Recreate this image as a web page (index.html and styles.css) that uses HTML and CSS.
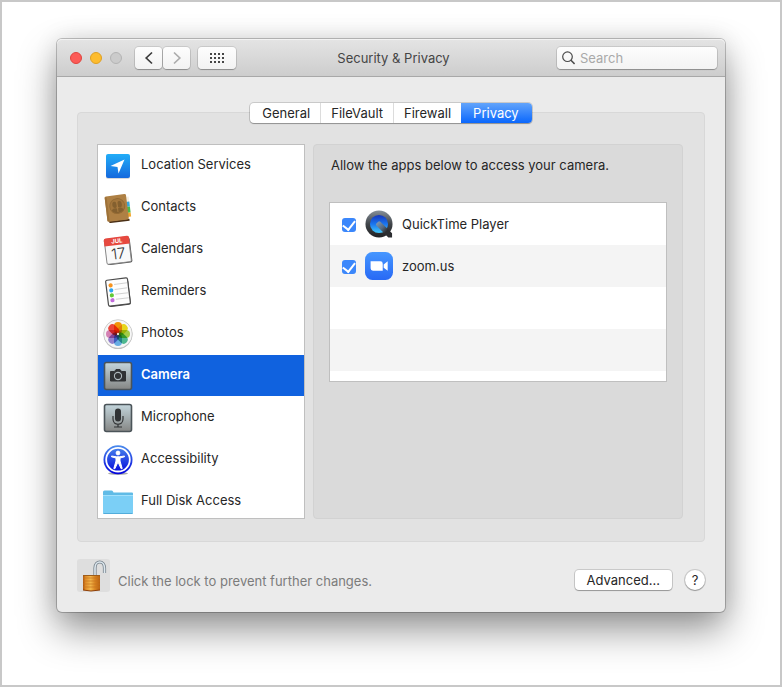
FILE: index.html
```html
<!DOCTYPE html>
<html lang="en">
<head>
<meta charset="utf-8">
<meta name="viewport" content="width=device-width, initial-scale=1">
<title>Security &amp; Privacy</title>
<link rel="stylesheet" href="styles.css">
</head>
<body>
<main class="window">
  <header class="titlebar">
    <div class="titlebar-side">
      <div class="lights">
        <button class="light light-close" aria-label="Close"></button>
        <button class="light light-minimize" aria-label="Minimize"></button>
        <button class="light light-zoom" aria-label="Full screen" disabled></button>
      </div>
      <div class="history">
        <button class="tool" aria-label="Back"><svg width="10" height="14" viewBox="0 0 10 14"><path d="M8 1.500 2.200 7 8 12.500" fill="none" stroke="#3c3c3c" stroke-width="1.700"/></svg></button>
        <button class="tool" aria-label="Forward" disabled><svg width="10" height="14" viewBox="0 0 10 14"><path d="M2 1.500 7.800 7 2 12.500" fill="none" stroke="#acacac" stroke-width="1.700"/></svg></button>
      </div>
      <button class="tool tool-grid" aria-label="Show all"><svg width="14" height="10" viewBox="0 0 14 10"><path d="M0 1h14M0 5h14M0 9h14" fill="none" stroke="#464646" stroke-width="2" stroke-dasharray="2 2"/></svg></button>
    </div>
    <h1 class="title">Security &amp; Privacy</h1>
    <div class="titlebar-side titlebar-end">
      <label class="search">
        <svg width="13" height="14" viewBox="0 0 13 14"><g fill="none" stroke="#4a4a4a" stroke-width="1.200"><circle cx="5.500" cy="5.700" r="4.800"/><path d="m9 9.200 3.600 3.800" stroke-width="1.500"/></g></svg>
        <input type="search" placeholder="Search" aria-label="Search">
      </label>
    </div>
  </header>

  <div class="content">
    <nav class="tabs" aria-label="Sections">
      <button class="tab">General</button>
      <button class="tab">FileVault</button>
      <button class="tab tab-last">Firewall</button>
      <button class="tab tab-active" aria-current="page">Privacy</button>
    </nav>

    <section class="group">
      <ul class="services">
        <li><button class="service">
          <svg class="icon" viewBox="0 0 30 30"><defs><linearGradient id="loc" x2="0" y2="1"><stop stop-color="#22adf8"/><stop offset="1" stop-color="#1569dd"/></linearGradient></defs><rect x="3" y="4" width="24" height="24" rx="2" fill="#000" opacity=".15"/><rect x="3" y="3" width="24" height="24" rx="2" fill="url(#loc)"/><path d="M21.500 8.500 7.500 15l7 1 1 6.500z" fill="#fff"/></svg>
          Location Services</button></li>
        <li><button class="service">
          <svg class="icon" viewBox="0 0 30 30"><g transform="rotate(-7 15 15)"><rect x="23" y="5" width="4" height="7" fill="#f5efe2"/><rect x="23" y="10" width="4" height="5" fill="#36a8df"/><rect x="23" y="15" width="4" height="6" fill="#49b94b"/><rect x="23" y="21" width="4" height="4" fill="#f2a82d"/><path d="M4 27h21v2H5z" fill="#4a3016"/><rect x="3" y="2" width="21.500" height="25.500" rx="1.500" fill="#ae8044"/><path d="M3 3h2v24H3z" fill="#9d7138"/><circle cx="14.500" cy="13" r="7.500" fill="#a3763c" stroke="#936a34"/><g fill="#84602f"><ellipse cx="12" cy="11.500" rx="2.300" ry="3.200"/><ellipse cx="17" cy="11.500" rx="2.300" ry="3.200"/><path d="M8.500 17c1-2.500 5-2.500 6-1 1-1.500 5-1.500 6 1-3 4-9 4-12 0z"/></g><path d="M14.500 8v11" stroke="#a87b40"/></g></svg>
          Contacts</button></li>
        <li><button class="service">
          <svg class="icon" viewBox="0 0 30 30"><g transform="rotate(-7 15 15)"><rect x="3" y="4" width="25" height="25" rx="2" fill="#555"/><rect x="2.500" y="3" width="24.500" height="25" rx="1.500" fill="#f9f9f9" stroke="#888"/><path d="M2 4q0-2 2-2h21.500q2 0 2 2v6H2z" fill="#e6493f"/><text class="cal-month" x="15" y="8">JUL</text><text class="cal-day" x="15" y="24">17</text></g></svg>
          Calendars</button></li>
        <li><button class="service">
          <svg class="icon" viewBox="0 0 30 30"><g transform="rotate(-7 15 15)"><rect x="4.500" y="3.500" width="22" height="25.500" rx="2" fill="#444"/><rect x="4" y="2" width="22" height="26" rx="1.500" fill="#fdfdfd" stroke="#4b4b4b" stroke-width="1.200"/><path d="M12 7h13M12 12h13M12 17h13M12 22h13" stroke="#d2d2d2"/><circle cx="8.500" cy="7.500" r="2.100" fill="#f7931e"/><circle cx="8.500" cy="12.500" r="2.100" fill="#2fa5f0"/><circle cx="8.500" cy="17.500" r="2.100" fill="#62c936"/><circle cx="8.500" cy="22.500" r="2.100" fill="#c26bdc"/></g></svg>
          Reminders</button></li>
        <li><button class="service">
          <svg class="icon" viewBox="0 0 30 30"><circle cx="15" cy="15.600" r="14.300" fill="#aaa"/><circle cx="15" cy="15" r="14.300" fill="#f6f6f6" stroke="#c4c4c4" stroke-width=".8"/><g class="petals"><rect x="11" y="3" width="8" height="12" rx="4" fill="#fb9a0a"/><rect x="11" y="3" width="8" height="12" rx="4" fill="#f0dd1c" transform="rotate(45 15 15)"/><rect x="11" y="3" width="8" height="12" rx="4" fill="#a9d44a" transform="rotate(90 15 15)"/><rect x="11" y="3" width="8" height="12" rx="4" fill="#52bf95" transform="rotate(135 15 15)"/><rect x="11" y="3" width="8" height="12" rx="4" fill="#6cb4ec" transform="rotate(180 15 15)"/><rect x="11" y="3" width="8" height="12" rx="4" fill="#9a86d4" transform="rotate(225 15 15)"/><rect x="11" y="3" width="8" height="12" rx="4" fill="#dc86bb" transform="rotate(270 15 15)"/><rect x="11" y="3" width="8" height="12" rx="4" fill="#f4493c" transform="rotate(315 15 15)"/></g><circle cx="15" cy="15" r="1.200" fill="#e9dccb"/></svg>
          Photos</button></li>
        <li><button class="service service-active" aria-current="true">
          <svg class="icon" viewBox="0 0 30 30"><defs><linearGradient id="metal" x2="0" y2="1"><stop stop-color="#c3d5dc"/><stop offset="1" stop-color="#858684"/></linearGradient></defs><rect x="1.500" y="1.500" width="27" height="27" rx="2" fill="url(#metal)" stroke="#4b5459" stroke-width="1.600"/><path d="M7.500 10.500h4l1.500-2h4l1.500 2h4v9.500h-15z" fill="#303234" stroke="#303234" stroke-linejoin="round"/><circle cx="15" cy="15" r="3.600" fill="none" stroke="#aeb8bc" stroke-width="1.100"/></svg>
          Camera</button></li>
        <li><button class="service">
          <svg class="icon" viewBox="0 0 30 30"><rect x="1.500" y="1.500" width="27" height="27" rx="2" fill="url(#metal)" stroke="#4b5459" stroke-width="1.600"/><rect x="12" y="5.500" width="6" height="13" rx="3" fill="#303234"/><path d="M10 13v3c0 7 10 7 10 0v-3M15 21v3M11 24h8" fill="none" stroke="#303234" stroke-width="1.200"/></svg>
          Microphone</button></li>
        <li><button class="service">
          <svg class="icon" viewBox="0 0 30 30"><defs><linearGradient id="acc" x2="0" y2="1"><stop stop-color="#4c8dec"/><stop offset="1" stop-color="#0000dc"/></linearGradient></defs><ellipse cx="15" cy="28.500" rx="10" ry="1.500" fill="#aaa"/><circle cx="15" cy="14.700" r="14.500" fill="url(#acc)"/><circle cx="15" cy="14.700" r="11.800" fill="none" stroke="#fff" stroke-width="1.800"/><g fill="#fff" stroke="#fff" stroke-linejoin="round"><circle cx="15" cy="8" r="1.900"/><path d="m8.500 11 5 .8h3l5-.8v.8l-4.500 1.200v3l2.200 7.500-1 .3-3.200-6.800-3.200 6.800-1-.3L13 16v-3l-4.500-1.200z"/></g></svg>
          Accessibility</button></li>
        <li><button class="service">
          <svg class="icon" viewBox="0 0 30 30"><path d="M0 26V5q0-1.500 1.500-1.500h7q1 0 1.500 1l.5 1H29q1 0 1 1V26z" fill="#60bbe6"/><path d="M0 8.500h30V26q0 1-1 1H1q-1 0-1-1z" fill="#7bcff6"/><path d="M0 8.500h30" stroke="#a2e0fb"/><path d="M.5 26.500h29" stroke="#52addb"/></svg>
          Full Disk Access</button></li>
      </ul>

      <div class="panel">
        <p class="panel-text">Allow the apps below to access your camera.</p>
        <ul class="apps">
          <li class="app"><label>
            <input type="checkbox" checked>
            <svg class="app-icon" viewBox="0 0 30 30"><defs><linearGradient id="qt" x2="0" y2="1"><stop stop-color="#87919a"/><stop offset=".5" stop-color="#41454a"/><stop offset="1" stop-color="#202123"/></linearGradient><linearGradient id="qb" x2="0" y2="1"><stop stop-color="#1736bc"/><stop offset=".5" stop-color="#1a75ef"/><stop offset="1" stop-color="#43cafa"/></linearGradient><linearGradient id="qs" gradientUnits="userSpaceOnUse" x1="13" y1="13" x2="23" y2="23"><stop stop-color="#7f98b4"/><stop offset=".6" stop-color="#566a80"/><stop offset="1" stop-color="#2b2d30"/></linearGradient></defs><circle cx="15" cy="15" r="14.500" fill="url(#qt)"/><circle cx="15" cy="15" r="9.700" fill="url(#qb)"/><path d="m12.200 14.500 2-2q1.200-.8 2.300.2L29 25v4.500h-4L12.200 16.700q-1-1.100 0-2.200z" fill="url(#qs)"/></svg>
            <span>QuickTime Player</span></label></li>
          <li class="app"><label>
            <input type="checkbox" checked>
            <svg class="app-icon" viewBox="0 0 30 30"><defs><linearGradient id="zm" x2="0" y2="1"><stop stop-color="#4697ff"/><stop offset="1" stop-color="#2869f5"/></linearGradient></defs><rect width="30" height="30" rx="8" fill="url(#zm)"/><path d="M6 10h10.500q2.500 0 2.500 2.500V20H8.500Q6 20 6 17.500zM20 13.500 24.300 10v10L20 17z" fill="#fff"/></svg>
            <span>zoom.us</span></label></li>
          <li class="app"></li>
          <li class="app"></li>
          <li class="app"></li>
        </ul>
      </div>
    </section>

    <footer class="footer">
      <button class="lock" aria-label="Lock"><svg width="33" height="33" viewBox="0 0 33 33"><defs><linearGradient id="brass"><stop stop-color="#a8520d"/><stop offset=".15" stop-color="#df8c27"/><stop offset=".45" stop-color="#f3b74c"/><stop offset=".7" stop-color="#d98421"/><stop offset="1" stop-color="#b8610f"/></linearGradient></defs><path d="M18 16V9c0-8 9.500-8 9.500 0v5" fill="none" stroke="#78838c" stroke-width="3.200"/><path d="M18 16V9c0-8 9.500-8 9.500 0v5" fill="none" stroke="#dce7ee" stroke-width="1.600"/><path d="M6 16h17v15l-9 1-8-1z" fill="url(#brass)"/><path d="M6 19h17M6 22h17M6 25h17M6 28h17" stroke="#c57420" stroke-width=".7"/><path d="M6 16.500h17" stroke="#9e5d1a"/><path d="m6 31 8 1 9-1" fill="none" stroke="#8f3f08"/></svg></button>
      <p class="footer-text">Click the lock to prevent further changes.</p>
      <button class="advanced">Advanced...</button>
      <button class="help" aria-label="Help">?</button>
    </footer>
  </div>
</main>
</body>
</html>
```
FILE: styles.css
```css
* {
  box-sizing: border-box;
}

body {
  margin: 0;
  min-height: 100vh;
  padding: 37px 55px 72px;
  border: 2px solid #c8c8c8;
  background: #fff;
  color: #262626;
  font: 13px/20px Inter, "Liberation Sans", sans-serif;
}

button,
input {
  margin: 0;
  padding: 0;
  border: 0;
  color: inherit;
  font: inherit;
}

ul {
  margin: 0;
  padding: 0;
  list-style: none;
}

p,
h1 {
  margin: 0;
  font: inherit;
}

svg {
  display: block;
  flex: none;
}

.window {
  border-radius: 5px;
  background: #ebebeb;
  box-shadow: 0 0 0 1px rgba(0, 0, 0, .22), 0 18px 38px rgba(0, 0, 0, .42), 0 0 24px rgba(0, 0, 0, .1);
}

/* Title bar */

.titlebar {
  display: flex;
  align-items: center;
  height: 38px;
  padding: 0 8px 0 13px;
  border-bottom: 1px solid #a8a8a8;
  border-radius: 5px 5px 0 0;
  background: linear-gradient(#e4e4e4, #cdcdcd);
  box-shadow: inset 0 1px #f3f3f3;
}

.titlebar-side {
  display: flex;
  flex: 1;
  align-items: center;
}

.titlebar-end {
  justify-content: flex-end;
}

.title {
  color: #454545;
}

.lights {
  display: flex;
  gap: 8px;
  margin-right: 13px;
}

.light {
  width: 12px;
  height: 12px;
  border: 1px solid #e0443e;
  border-radius: 50%;
  background: #fc5b57;
}

.light-minimize {
  border-color: #dfa023;
  background: #fdbc2e;
}

.light-zoom {
  border-color: #b4b4b4;
  background: #cbcbcb;
}

.history {
  display: flex;
  gap: 1px;
  margin-right: 8px;
}

.tool {
  display: grid;
  place-items: center;
  width: 27px;
  height: 22px;
  border-radius: 4px;
  background: linear-gradient(#fdfdfd, #f2f2f2);
  box-shadow: 0 0 0 1px rgba(0, 0, 0, .1), 0 1px 1px rgba(0, 0, 0, .25);
}

.tool-grid {
  width: 38px;
}

.search {
  display: flex;
  align-items: center;
  gap: 5px;
  width: 160px;
  height: 22px;
  padding: 0 5px;
  border-radius: 4px;
  background: linear-gradient(#fdfdfd, #f3f3f3);
  box-shadow: 0 0 0 1px rgba(0, 0, 0, .1), 0 1px 1px rgba(0, 0, 0, .25);
}

.search input {
  flex: 1;
  min-width: 0;
  outline: 0;
  background: none;
}

.search input::placeholder {
  color: #a9a9a9;
}

/* Content */

.content {
  padding: 26px 20px 20px;
}

.tabs {
  position: relative;
  display: flex;
  width: fit-content;
  margin: 0 auto -11px;
  border-radius: 4px;
  background: #fff;
  box-shadow: 0 0 0 1px rgba(0, 0, 0, .14), 0 1px 1px rgba(0, 0, 0, .25);
}

.tab {
  height: 20px;
  padding: 0 10px;
  border-right: 1px solid #dcdcdc;
  background: none;
}

.tab:first-child {
  padding-left: 12px;
}

.tab-last {
  border-right: 0;
}

.tab-active {
  padding: 0 13px 0 12px;
  border: 0;
  border-radius: 0 4px 4px 0;
  background: linear-gradient(#62a4fb, #0a67fd);
  color: #fff;
}

.group {
  display: flex;
  gap: 8px;
  padding: 31px 21px 22px 19px;
  border: 1px solid #d8d8d8;
  border-radius: 4px;
  background: #e2e2e2;
}

.services {
  flex: none;
  width: 208px;
  height: 375px;
  overflow: hidden;
  border: 1px solid #bfbfbf;
  background: #fff;
}

.service {
  display: flex;
  align-items: center;
  gap: 8px;
  width: 100%;
  height: 41px;
  margin-bottom: 1px;
  padding: 0 5px 3px;
  background: none;
  text-align: left;
}

.service-active {
  background: #1062df;
  color: #fff;
  font-weight: 600;
}

.icon {
  width: 30px;
  height: 30px;
  transform: translateY(2px);
}

.petals rect {
  mix-blend-mode: multiply;
}

.cal-month,
.cal-day {
  font-family: Inter, "Liberation Sans", sans-serif;
  text-anchor: middle;
}

.cal-month {
  fill: #fff;
  font-size: 6px;
  font-weight: 700;
}

.cal-day {
  fill: #333;
  font-size: 15px;
  font-weight: 300;
}

.panel {
  flex: 1;
  min-width: 0;
  padding: 10px 15px 15px;
  border: 1px solid #d2d2d2;
  border-radius: 4px;
  background: #dadada;
}

.panel-text {
  margin: 0 2px 27px;
}

.apps {
  height: 180px;
  overflow: hidden;
  border: 1px solid #bfbfbf;
  background: #fff;
}

.app {
  height: 42px;
}

.app:nth-child(even) {
  background: #f4f4f4;
}

.app label {
  display: flex;
  align-items: center;
  height: 42px;
  padding-left: 12px;
}

.app input {
  display: grid;
  place-items: center;
  appearance: none;
  width: 14px;
  height: 14px;
  margin: 2px 9px 0 0;
  border-radius: 3px;
  background: #3b87fb;
}

.app input:checked::before {
  content: "";
  width: 6px;
  height: 10px;
  margin-bottom: 2px;
  border: solid #fff;
  border-width: 0 2px 2px 0;
  transform: rotate(38deg);
}

.app-icon {
  width: 28px;
  height: 28px;
  margin-right: 9px;
}

.app span {
  padding-bottom: 1px;
}

/* Footer */

.footer {
  display: flex;
  align-items: center;
  margin-top: 17px;
}

.lock {
  border-radius: 3px;
  background: #dedede;
}

.footer-text {
  flex: 1;
  padding: 10px 0 0 8px;
  color: #7c7c7c;
}

.advanced,
.help {
  height: 20px;
  background: #fff;
  box-shadow: 0 0 0 1px rgba(0, 0, 0, .14), 0 1px 1px rgba(0, 0, 0, .25);
}

.advanced {
  margin: 9px 13px 0 0;
  padding: 0 12px;
  border-radius: 4px;
}

.help {
  width: 20px;
  margin-top: 8px;
  border-radius: 50%;
}
```
